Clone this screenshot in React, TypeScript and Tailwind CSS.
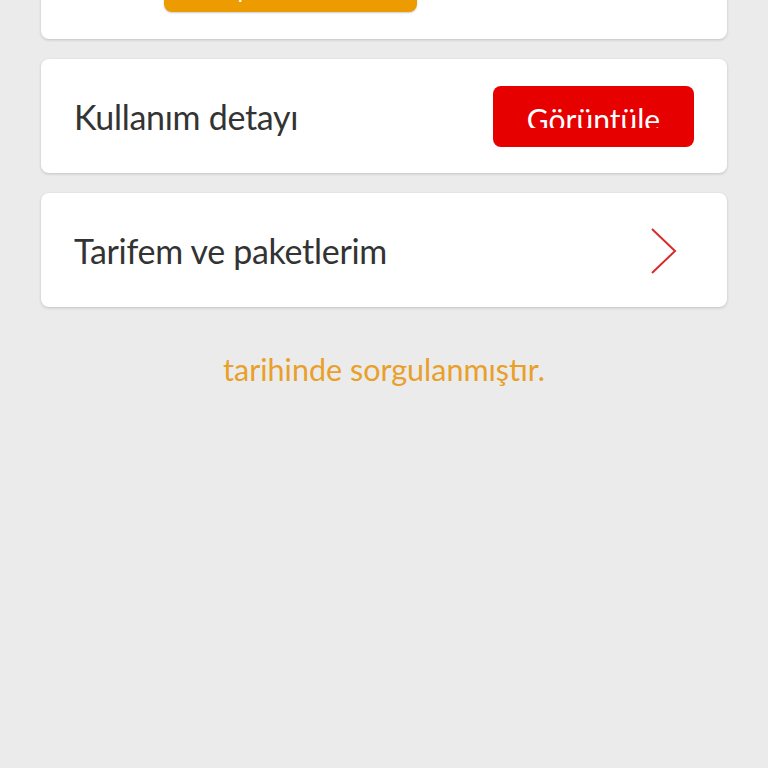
const font = { fontFamily: "Lato, 'Open Sans', sans-serif" };

const App = () => {
  return (
    <div className="min-h-[768px] h-[768px] overflow-hidden bg-[#ebebeb]" style={font}>
      <div className="px-[41px] flex flex-col gap-[20px]">
        {/* Top card (mostly scrolled off) */}
        <div className="-mt-[61px] h-[100px] bg-white rounded-[8px] shadow-[0_1px_3px_rgba(0,0,0,0.18)] flex items-end pb-[27px] pl-[123px]">
          <div className="w-[253px] h-[52px] bg-[#ec9b00] rounded-[8px] shadow-[0_1px_2px_rgba(0,0,0,0.2)] overflow-hidden flex justify-center">
            <span className="text-white text-[24px] leading-none mt-[17px]">Ek paket satın al</span>
          </div>
        </div>

        {/* Kullanım detayı */}
        <div className="h-[114px] bg-white rounded-[8px] shadow-[0_1px_3px_rgba(0,0,0,0.18)] flex items-center justify-between pl-[33px] pr-[33px]">
          <span className="text-[#333333] text-[34px] tracking-[-0.3px]">Kullanım detayı</span>
          <button className="w-[201px] h-[61px] bg-[#e60000] rounded-[8px] flex items-start justify-center overflow-hidden">
            <span className="text-white text-[30px] leading-[38px] h-[44px] overflow-hidden block pt-[16px] -mt-[2px]">Görüntüle</span>
          </button>
        </div>

        {/* Tarifem ve paketlerim */}
        <div className="h-[114px] bg-white rounded-[8px] shadow-[0_1px_3px_rgba(0,0,0,0.18)] flex items-center justify-between pl-[33px] pr-[49px]">
          <span className="text-[#333333] text-[34px] tracking-[-0.3px]">Tarifem ve paketlerim</span>
          <svg width="28" height="48" viewBox="0 0 28 48" fill="none" className="mt-[1px]">
            <path d="M2 2 L25 24 L2 46" stroke="#d92a2a" strokeWidth="2" />
          </svg>
        </div>

        <p className="text-center text-[#e8a02a] text-[30.5px] mt-[20px]">tarihinde sorgulanmıştır.</p>
      </div>
    </div>
  );
};

export default App;
